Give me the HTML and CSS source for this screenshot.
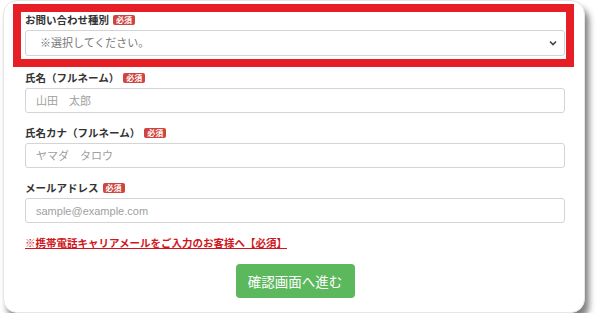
FILE: index.html
```html
<!DOCTYPE html>
<html lang="ja">
<head>
    <meta charset="UTF-8">
    <meta name="viewport" content="width=device-width, initial-scale=1.0">
    <title>お問い合わせ</title>
    <link rel="stylesheet" href="styles.css">
</head>

<body>
    <div class="card">
        <form class="contact-form">
            <div class="field highlight">
                <label for="kind" class="form-label">お問い合わせ種別<span class="req">必須</span></label>
                <div class="select-wrap">
                    <select id="kind" class="form-control form-select">
                        <option>※選択してください。</option>
                    </select>
                    <svg class="select-arrow" width="8" height="6" viewBox="0 0 8 6">
                        <path d="M1 1.5 L4 4.5 L7 1.5" fill="none" stroke="#444" stroke-width="1.6"/>
                    </svg>
                </div>
            </div>
            <div class="field">
                <label for="name" class="form-label">氏名（フルネーム）<span class="req">必須</span></label>
                <input type="text" id="name" class="form-control" placeholder="山田　太郎">
            </div>
            <div class="field">
                <label for="kana" class="form-label">氏名カナ（フルネーム）<span class="req">必須</span></label>
                <input type="text" id="kana" class="form-control" placeholder="ヤマダ　タロウ">
            </div>
            <div class="field">
                <label for="mail" class="form-label">メールアドレス<span class="req">必須</span></label>
                <input type="email" id="mail" class="form-control" placeholder="sample@example.com">
            </div>
            <a href="#" class="carrier-link">※携帯電話キャリアメールをご入力のお客様へ【必須】</a>
            <div class="actions">
                <button type="submit" class="btn-confirm">確認画面へ進む</button>
            </div>
        </form>
    </div>
</body>
</html>
```

FILE: styles.css
```css
body {
    background-color: #fff;
    color: #333;
    font-family: "Noto Sans CJK JP", sans-serif;
    margin: 0;
    padding: 0;
}

.card {
    width: 582px;
    height: 313px;
    margin-left: 3px;
    box-sizing: border-box;
    background-color: #fff;
    border: 1px solid #e6e6e6;
    border-radius: 14px;
    box-shadow: 4px 7px 6px rgba(0, 0, 0, 0.5);
    padding: 3px 19px 0 21px;
}

.contact-form {
    display: flex;
    flex-direction: column;
}

.field {
    margin-bottom: 12px;
}

/* 赤枠で囲まれた項目 */
.highlight {
    border: 8px solid #e61e25;
    padding: 0 0 3px 4px;
    margin: 0 -9px 3px -12px;
}

.form-label {
    display: block;
    font-size: 10.5px;
    font-weight: bold;
    line-height: 15px;
    margin-bottom: 3px;
    color: #333;
}

.req {
    display: inline-block;
    background-color: #d0433e;
    color: #fff;
    font-size: 8px;
    line-height: 10px;
    padding: 0 3px;
    border-radius: 2px;
    margin-left: 4px;
    vertical-align: 1px;
}

.form-control {
    display: block;
    width: 540px;
    height: 25px;
    box-sizing: border-box;
    border: 1px solid #d4d4d4;
    border-radius: 3px;
    background-color: #fff;
    padding: 0 10px;
    font-family: "Liberation Sans", "Noto Sans CJK JP", sans-serif;
    font-size: 11px;
    color: #555;
}

.form-control::placeholder {
    color: #a0a0a0;
}

.select-wrap {
    position: relative;
    width: 540px;
}

.form-select {
    height: 26px;
    padding-left: 14px;
    color: #777;
    appearance: none;
    -webkit-appearance: none;
}

.select-arrow {
    position: absolute;
    right: 8px;
    top: 10px;
}

.carrier-link {
    margin-top: 1px;
    font-size: 10.5px;
    line-height: 13px;
    font-weight: bold;
    color: #d0161c;
    text-decoration: underline;
    align-self: flex-start;
}

.actions {
    display: flex;
    justify-content: center;
    margin-top: 15px;
}

.btn-confirm {
    background-color: #5cb85c;
    color: #fff;
    border: none;
    border-radius: 4px;
    width: 119px;
    height: 34px;
    font-family: "Noto Sans CJK JP", sans-serif;
    font-size: 13.5px;
    padding: 0;
}
```
